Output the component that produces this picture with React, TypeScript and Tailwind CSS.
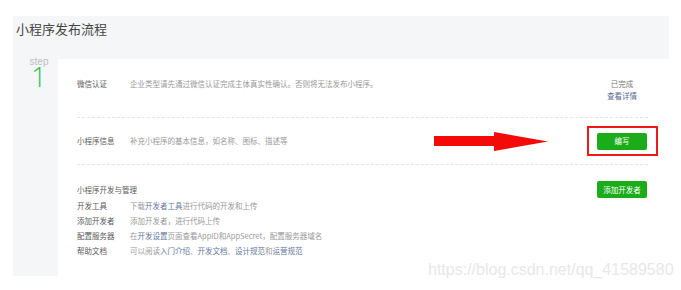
import React from "react";

const cjk = { fontFamily: '"Noto Sans CJK SC", "Liberation Sans", sans-serif' };

export default function App() {
  const list: { label: string; parts: { t: string; link?: boolean }[] }[] = [
    {
      label: "开发工具",
      parts: [{ t: "下载" }, { t: "开发者工具", link: true }, { t: "进行代码的开发和上传" }],
    },
    { label: "添加开发者", parts: [{ t: "添加开发者，进行代码上传" }] },
    {
      label: "配置服务器",
      parts: [{ t: "在" }, { t: "开发设置", link: true }, { t: "页面查看AppID和AppSecret，配置服务器域名" }],
    },
    {
      label: "帮助文档",
      parts: [
        { t: "可以阅读" },
        { t: "入门介绍", link: true },
        { t: "、" },
        { t: "开发文档", link: true },
        { t: "、" },
        { t: "设计规范", link: true },
        { t: "和" },
        { t: "运营规范", link: true },
      ],
    },
  ];

  return (
    <div
      className="relative w-[681px] h-[290px] bg-white overflow-hidden pt-[16px] pl-[13px]"
      style={cjk}
    >
      <div className="w-[656px] h-[260px] bg-[#f5f6f8] flex flex-col">
        <div className="h-[43px] pl-[3px] pt-[5px] text-[13px] leading-[16px] text-[#444444]">
          小程序发布流程
        </div>
        <div className="flex flex-1">
          <div className="w-[45px] flex flex-col items-center pl-[7px]">
            <div
              className="-mt-[2px] text-[10px] leading-[10px] text-[#bdbdbd]"
              style={{ fontFamily: '"Liberation Sans", sans-serif' }}
            >
              step
            </div>
            <div
              className="text-[27px] leading-[19px] font-light text-[#2bbf55]"
              style={{ fontFamily: '"Open Sans", Roboto, sans-serif' }}
            >
              1
            </div>
          </div>
          <div className="flex-1 bg-white pl-[19px] pr-[21px]">
            {/* row 1 */}
            <div className="flex items-start pt-[19px] pb-[15px] border-b border-dashed border-[#e4e4e4] text-[7.5px] leading-[12px]">
              <div className="w-[53px] text-[#5a5a5a]">微信认证</div>
              <div className="flex-1 text-[#999999]">企业类型请先通过微信认证完成主体真实性确认。否则将无法发布小程序。</div>
              <div className="w-[50px] mr-[1px] flex flex-col items-center">
                <span className="text-[#777777]">已完成</span>
                <span className="text-[#576b95]">查看详情</span>
              </div>
            </div>
            {/* row 2 */}
            <div className="flex items-center h-[47px] border-b border-dashed border-[#e4e4e4] text-[7.5px] leading-[12px]">
              <div className="w-[53px] text-[#5a5a5a]">小程序信息</div>
              <div className="flex-1 text-[#999999]">补充小程序的基本信息，如名称、图标、描述等</div>
              <div className="relative w-[50px] mr-[1px] h-[17px] bg-[#1aad19] rounded-[2px] flex items-center justify-center text-white text-[7.5px]">
                编写
                <div className="absolute -left-[10px] -right-[11px] -top-[7px] -bottom-[6px] border-2 border-[#f01818]" />
              </div>
            </div>
            {/* row 3 */}
            <div className="pt-[16px] text-[7.5px]">
              <div className="flex items-center h-[17px]">
                <div className="flex-1 text-[#5a5a5a] leading-[12px]">小程序开发与管理</div>
                <div className="w-[50px] mr-[1px] h-[17px] bg-[#1aad19] rounded-[2px] flex items-center justify-center text-white leading-[12px]">
                  添加开发者
                </div>
              </div>
              <div className="flex flex-col">
                {list.map((r) => (
                  <div key={r.label} className="flex h-[15px] items-center leading-[15px]">
                    <div className="w-[53px] text-[#5a5a5a]">{r.label}</div>
                    <div className="text-[#999999]">
                      {r.parts.map((p, i) => (
                        <span key={i} className={p.link ? "text-[#6578a0]" : ""}>
                          {p.t}
                        </span>
                      ))}
                    </div>
                  </div>
                ))}
              </div>
            </div>
          </div>
        </div>
      </div>

      {/* red arrow */}
      <svg className="absolute left-[434px] top-[130px]" width="116" height="24" viewBox="0 0 116 24">
        <rect x="0" y="6" width="61" height="10" fill="#f50a0a" />
        <polygon points="60,2 114,11.5 60,21" fill="#f50a0a" />
      </svg>

      {/* watermark */}
      <div
        className="absolute left-[428px] top-[261px] text-[16px] leading-[18px] text-[#e8e8e8]"
        style={{ fontFamily: '"Liberation Sans", Arial, sans-serif' }}
      >
        https://blog.csdn.net/qq_41589580
      </div>
    </div>
  );
}
